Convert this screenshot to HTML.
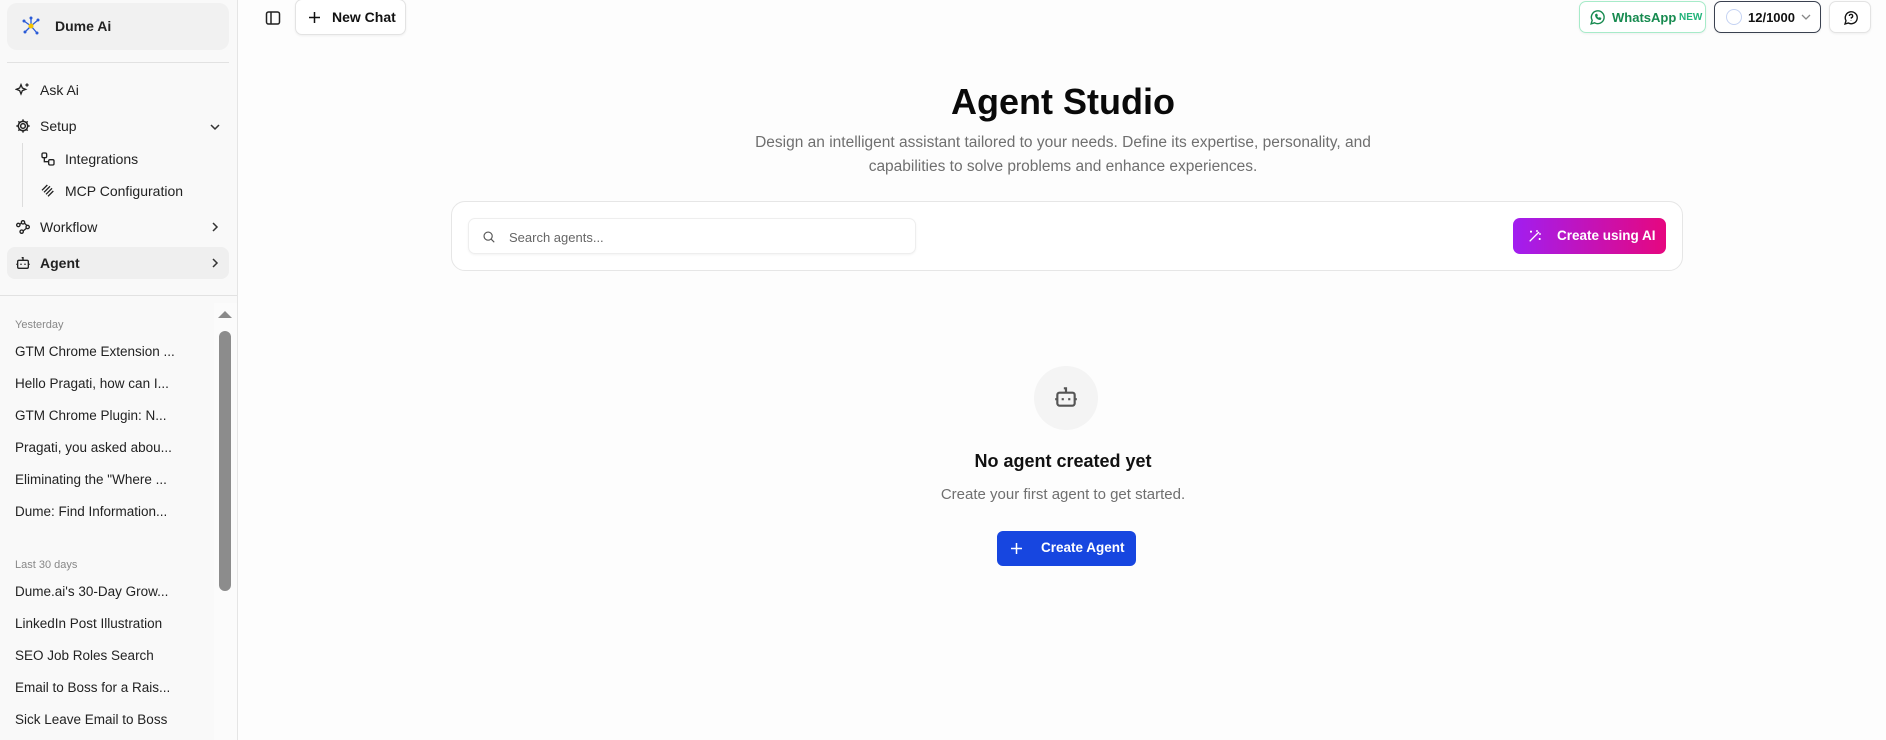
<!DOCTYPE html>
<html><head><meta charset="utf-8"><style>
*{box-sizing:border-box;margin:0;padding:0}
body{width:1886px;height:740px;overflow:hidden;background:#fdfdfd;font-family:"Liberation Sans",sans-serif;color:#111;position:relative}
.sb{position:absolute;left:0;top:0;width:238px;height:740px;background:#f9f9f9;border-right:1px solid #e5e5e5}
.logo{position:absolute;left:7px;top:3px;width:222px;height:47px;background:#f1f1f1;border-radius:10px}
.logo span{position:absolute;left:48px;top:15px;font-size:14px;font-weight:bold;color:#222}
.hr{position:absolute;left:7px;width:222px;height:1px;background:#e2e2e2}
.nav{position:absolute;left:15px;font-size:14px;color:#222;display:flex;align-items:center}
.nav svg{margin-right:9px}
.chev{position:absolute;left:209px;}
.agent{position:absolute;left:7px;top:247px;width:222px;height:32px;background:#efefef;border-radius:8px}
.lbl{position:absolute;left:15px;font-size:11px;color:#888}
.it{position:absolute;left:15px;font-size:13.5px;color:#222;white-space:nowrap}
.btn{position:absolute;background:#fff;border:1px solid #e3e3e3;border-radius:7px;box-shadow:0 1px 2px rgba(0,0,0,.06)}
.c{position:absolute;left:0;width:100%;text-align:center}
</style></head><body>
<div class="sb">
 <div class="logo">
  <svg style="position:absolute;left:14px;top:13px" width="20" height="20" viewBox="0 0 20 20"><g stroke="#2a5bd7" stroke-width="1.3"><line x1="10" y1="10" x2="10" y2="2"/><line x1="10" y1="10" x2="3" y2="5"/><line x1="10" y1="10" x2="17" y2="4"/><line x1="10" y1="10" x2="4" y2="16"/><line x1="10" y1="10" x2="16" y2="17"/></g><g fill="#2a5bd7"><circle cx="10" cy="2" r="1.5"/><circle cx="3" cy="5" r="1.5"/><circle cx="17" cy="4" r="1.5"/><circle cx="4" cy="16" r="1.5"/><circle cx="16" cy="17" r="1.5"/></g><circle cx="10" cy="10" r="2.5" fill="#f5c400"/></svg>
  <span>Dume Ai</span></div>
 <div class="hr" style="top:62px"></div>
 <div class="nav" style="top:82px"><svg width="16" height="16" viewBox="0 0 24 24" fill="none" stroke="#222" stroke-width="2"><path d="M9 4l2 5 5 2-5 2-2 5-2-5-5-2 5-2z"/><path d="M18 2v5M15.5 4.5h5"/></svg>Ask Ai</div>
 <div class="nav" style="top:118px"><svg width="16" height="16" viewBox="0 0 24 24" fill="none" stroke="#222" stroke-width="2.2"><circle cx="12" cy="12" r="3.5"/><path d="M12 2v3M12 19v3M2 12h3M19 12h3M5 5l2 2M17 17l2 2M5 19l2-2M17 7l2-2"/><circle cx="12" cy="12" r="7"/></svg>Setup</div>
 <svg class="chev" style="top:121px" width="12" height="12" viewBox="0 0 12 12" fill="none" stroke="#333" stroke-width="1.5"><path d="M2 4l4 4 4-4"/></svg>
 <div style="position:absolute;left:22px;top:143px;width:1px;height:64px;background:#ddd"></div>
 <div class="nav" style="top:151px;left:40px"><svg width="16" height="16" viewBox="0 0 24 24" fill="none" stroke="#222" stroke-width="2"><rect x="3" y="3" width="7" height="7" rx="2"/><rect x="13" y="13" width="8" height="8" rx="2"/><path d="M6.5 10v6h6"/></svg>Integrations</div>
 <div class="nav" style="top:183px;left:40px"><svg width="16" height="16" viewBox="0 0 24 24" fill="none" stroke="#222" stroke-width="2"><path d="M3 11l8-8M6 14l9-9M9 17l9-9M12 20l8-8"/></svg>MCP Configuration</div>
 <div class="nav" style="top:219px"><svg width="16" height="16" viewBox="0 0 24 24" fill="none" stroke="#222" stroke-width="2"><circle cx="5" cy="9" r="2.5"/><circle cx="12" cy="5" r="2.5"/><circle cx="19" cy="12" r="2.5"/><circle cx="10" cy="19" r="2.5"/><path d="M7 8l3-2M14 6l4 4M17 14l-5 4"/></svg>Workflow</div>
 <svg class="chev" style="top:221px" width="12" height="12" viewBox="0 0 12 12" fill="none" stroke="#333" stroke-width="1.5"><path d="M4 2l4 4-4 4"/></svg>
 <div class="agent"></div>
 <div class="nav" style="top:255px;font-weight:bold"><svg width="16" height="16" viewBox="0 0 24 24" fill="none" stroke="#222" stroke-width="2"><rect x="4" y="8" width="16" height="12" rx="2"/><path d="M12 8V4h-2M9 13v2M15 13v2M2 14h2M20 14h2"/></svg>Agent</div>
 <svg class="chev" style="top:257px" width="12" height="12" viewBox="0 0 12 12" fill="none" stroke="#333" stroke-width="1.5"><path d="M4 2l4 4-4 4"/></svg>
 <div class="hr" style="top:295px;left:0;width:237px"></div>
 <div class="lbl" style="top:319px">Yesterday</div>
 <div class="it" style="top:344px">GTM Chrome Extension ...</div>
 <div class="it" style="top:376px">Hello Pragati, how can I...</div>
 <div class="it" style="top:408px">GTM Chrome Plugin: N...</div>
 <div class="it" style="top:440px">Pragati, you asked abou...</div>
 <div class="it" style="top:472px">Eliminating the "Where ...</div>
 <div class="it" style="top:504px">Dume: Find Information...</div>
 <div class="lbl" style="top:559px">Last 30 days</div>
 <div class="it" style="top:584px">Dume.ai's 30-Day Grow...</div>
 <div class="it" style="top:616px">LinkedIn Post Illustration</div>
 <div class="it" style="top:648px">SEO Job Roles Search</div>
 <div class="it" style="top:680px">Email to Boss for a Rais...</div>
 <div class="it" style="top:712px">Sick Leave Email to Boss</div>
 <div style="position:absolute;left:214px;top:303px;width:23px;height:437px;background:#fbfbfb"></div>
 <div style="position:absolute;left:218px;top:311px;width:0;height:0;border-left:7px solid transparent;border-right:7px solid transparent;border-bottom:7px solid #8a8a8a"></div>
 <div style="position:absolute;left:219px;top:331px;width:12px;height:260px;background:#8c8c8c;border-radius:6px"></div>
</div>
<svg style="position:absolute;left:265px;top:10px" width="16" height="16" viewBox="0 0 16 16" fill="none" stroke="#222" stroke-width="1.5"><rect x="1.5" y="2" width="13" height="12" rx="2"/><path d="M6 2v12"/></svg>
<div class="btn" style="left:295px;top:-1px;width:111px;height:36px"><svg style="position:absolute;left:12px;top:11px" width="13" height="13" viewBox="0 0 13 13" stroke="#111" stroke-width="1.5"><path d="M6.5 1v11M1 6.5h11"/></svg><span style="position:absolute;left:36px;top:9px;font-size:14px;font-weight:bold">New Chat</span></div>
<div class="btn" style="left:1579px;top:1px;width:127px;height:32px;border-color:#a7ebc9"><svg style="position:absolute;left:9px;top:7px" width="17" height="17" viewBox="0 0 24 24" fill="none" stroke="#168a4f" stroke-width="2"><path d="M3 21l1.5-5A9 9 0 1 1 8 19.5z"/><path d="M9 8c0 4 3 7 7 7l1-2-2-1-1 1c-1.5-.5-2.5-1.5-3-3l1-1-1-2z" fill="#168a4f" stroke-width="1"/></svg><span style="position:absolute;left:32px;top:8px;font-size:13px;font-weight:bold;color:#168a4f">WhatsApp</span><span style="position:absolute;left:99px;top:10px;font-size:10px;font-weight:bold;color:#21b37a">NEW</span></div>
<div class="btn" style="left:1714px;top:1px;width:107px;height:32px;border-color:#3a4150"><div style="position:absolute;left:11px;top:7px;width:16px;height:16px;border:1.5px solid #c5d3f3;border-radius:50%"></div><span style="position:absolute;left:33px;top:8px;font-size:13px;font-weight:bold">12/1000</span><svg style="position:absolute;left:86px;top:11px" width="10" height="8" viewBox="0 0 10 8" fill="none" stroke="#888" stroke-width="1.3"><path d="M1 2l4 4 4-4"/></svg></div>
<div class="btn" style="left:1829px;top:1px;width:42px;height:32px"><svg style="position:absolute;left:13px;top:8px" width="16" height="16" viewBox="0 0 24 24" fill="none" stroke="#111" stroke-width="2"><path d="M3 21l1.5-5A9 9 0 1 1 8 19.5z"/><path d="M9.5 9a2.5 2.5 0 1 1 3 2.5V13M12 16v.5"/></svg></div>

<div class="c" style="left:120px;top:81px;font-size:36px;font-weight:bold;color:#0a0a0a">Agent Studio</div>
<div class="c" style="left:120px;top:131px;font-size:15.5px;color:#6f6f6f;line-height:24px">Design an intelligent assistant tailored to your needs. Define its expertise, personality, and<br>capabilities to solve problems and enhance experiences.</div>

<div style="position:absolute;left:451px;top:201px;width:1232px;height:70px;background:#fff;border:1px solid #e6e6e6;border-radius:14px"></div>
<div style="position:absolute;left:468px;top:218px;width:448px;height:36px;background:#fff;border:1px solid #eee;border-radius:7px;box-shadow:0 1px 2px rgba(0,0,0,.05)"><svg style="position:absolute;left:13px;top:11px" width="14" height="14" viewBox="0 0 24 24" fill="none" stroke="#555" stroke-width="2"><circle cx="10.5" cy="10.5" r="7"/><path d="M16 16l5 5"/></svg><span style="position:absolute;left:40px;top:11px;font-size:13px;color:#666">Search agents...</span></div>
<div style="position:absolute;left:1513px;top:218px;width:153px;height:36px;border-radius:7px;background:linear-gradient(90deg,#a11ef0,#e6077f)"><svg style="position:absolute;left:14px;top:10px" width="16" height="16" viewBox="0 0 24 24" fill="none" stroke="#fff" stroke-width="2"><path d="M4 20L18 6M15 3v3M21 9h-3M6 4v3M4.5 5.5h3M19 15v3M17.5 16.5h3"/></svg><span style="position:absolute;left:44px;top:10px;font-size:13.5px;font-weight:bold;color:#fff">Create using AI</span></div>

<div style="position:absolute;left:1034px;top:366px;width:64px;height:64px;border-radius:50%;background:#f4f4f4"><svg style="position:absolute;left:19px;top:18px" width="26" height="26" viewBox="0 0 24 24" fill="none" stroke="#555" stroke-width="2"><rect x="4" y="8" width="16" height="12" rx="2"/><path d="M12 8V4h-2M9 13v2M15 13v2M2 14h2M20 14h2"/></svg></div>
<div class="c" style="left:120px;top:451px;font-size:18px;font-weight:bold;color:#111">No agent created yet</div>
<div class="c" style="left:120px;top:486px;font-size:15px;color:#6f6f6f">Create your first agent to get started.</div>
<div style="position:absolute;left:997px;top:531px;width:139px;height:35px;border-radius:6px;background:#1746e0"><svg style="position:absolute;left:13px;top:11px" width="13" height="13" viewBox="0 0 13 13" stroke="#fff" stroke-width="1.5"><path d="M6.5 1v11M1 6.5h11"/></svg><span style="position:absolute;left:44px;top:9px;font-size:13.5px;font-weight:bold;color:#fff">Create Agent</span></div>
</body></html>
